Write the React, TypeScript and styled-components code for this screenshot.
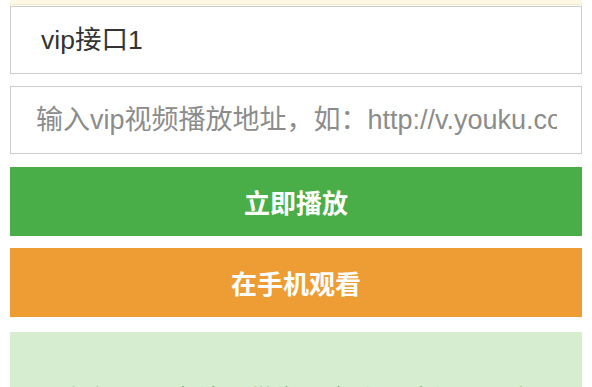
import styled, { createGlobalStyle } from 'styled-components'

const GlobalStyle = createGlobalStyle`
  html, body {
    margin: 0;
    padding: 0;
    background: #fff;
  }
  body {
    font-family: 'Liberation Sans', 'Noto Sans CJK SC', sans-serif;
    overflow: hidden;
  }
`

export default function App() {
  return (
    <>
      <GlobalStyle />
      <Page>
        <Notice />
        <Select defaultValue="1">
          <option value="1">vip接口1</option>
          <option value="2">vip接口2</option>
          <option value="3">vip接口3</option>
        </Select>
        <UrlInput placeholder="输入vip视频播放地址，如：http://v.youku.com/v_show/id_XMTg.html" />
        <ActionButton $color="#4aae48">立即播放</ActionButton>
        <ActionButton $color="#ed9d34">在手机观看</ActionButton>
        <Tips>
          <TipsText>温馨提示：本站仅供学习交流，请勿用于商业用途</TipsText>
        </Tips>
      </Page>
    </>
  )
}

const Page = styled.div`
  display: flex;
  flex-direction: column;
  padding: 0 10px;
  height: 387px;
  overflow: hidden;
`

const Notice = styled.div`
  height: 4px;
  background: #fcf8e3;
  border-bottom: 1px solid #f5e9c8;
  margin-bottom: 1px;
  flex-shrink: 0;
`

const Field = `
  box-sizing: border-box;
  width: 100%;
  height: 68px;
  flex-shrink: 0;
  border: 1px solid #cccccc;
  border-radius: 0;
  background: #fff;
  font-family: 'Liberation Sans', 'Noto Sans CJK SC', sans-serif;
  outline: none;
`

const Select = styled.select`
  ${Field}
  appearance: none;
  -webkit-appearance: none;
  padding: 0 30px;
  font-size: 26.5px;
  color: #333;
  margin-bottom: 12px;
`

const UrlInput = styled.input`
  ${Field}
  padding: 0 24px 0 25px;
  font-size: 27px;
  color: #333;
  margin-bottom: 13px;

  &::placeholder {
    color: #8c8c8c;
  }
`

const ActionButton = styled.button<{ $color: string }>`
  box-sizing: border-box;
  width: 100%;
  height: 69px;
  flex-shrink: 0;
  border: none;
  border-radius: 0;
  background: ${({ $color }) => $color};
  color: #fff;
  font-family: 'Noto Sans CJK SC', sans-serif;
  font-size: 26px;
  font-weight: bold;
  margin-bottom: 12px;

  & + & {
    margin-bottom: 15px;
  }
`

const Tips = styled.div`
  box-sizing: border-box;
  flex-shrink: 0;
  background: #d6edcf;
  padding: 50px 30px 30px;
`

const TipsText = styled.p`
  margin: 0;
  color: #3c763d;
  font-size: 26px;
  line-height: 1.4;
`
